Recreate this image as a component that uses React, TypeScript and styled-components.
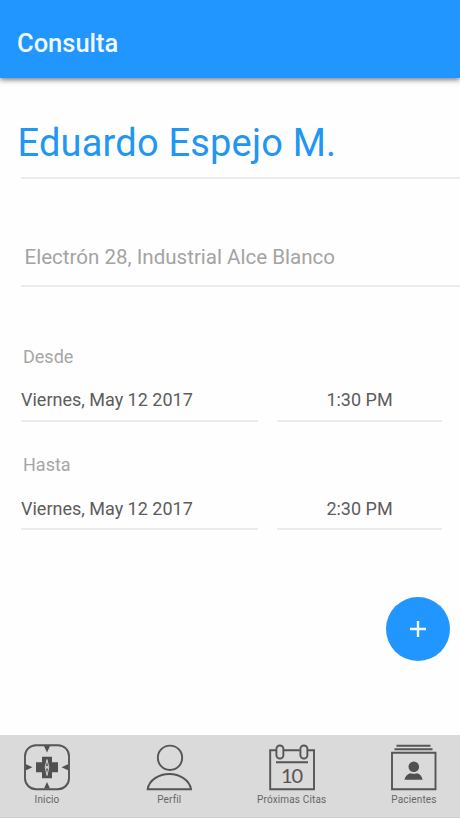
import React from 'react';
import styled, { createGlobalStyle } from 'styled-components';

const GlobalStyle = createGlobalStyle`
  * { box-sizing: border-box; }
  body { margin: 0; background: #fefefe; font-family: Roboto, sans-serif; }
`;

const Screen = styled.div`
  display: flex;
  flex-direction: column;
  width: 460px;
  height: 818px;
  overflow: hidden;
  background: #fefefe;
`;

const Header = styled.header`
  flex: none;
  height: 78px;
  padding: 28px 0 0 17px;
  background: #2196fe;
  box-shadow: 0 2px 5px rgba(0, 0, 0, 0.5);
`;

const Title = styled.h1`
  margin: 0;
  color: #f0f9ff;
  font-size: 25.5px;
  line-height: 30px;
  font-weight: 500;
`;

const Content = styled.main`
  flex: 1;
  display: flex;
  flex-direction: column;
`;

const NameField = styled.div`
  height: 101px;
  margin-left: 21px;
  padding-top: 42px;
  border-bottom: 2px solid #ebebeb;
  color: #2196f3;
  font-size: 38px;
  line-height: 46px;
  letter-spacing: 0.2px;
  text-indent: -3.5px;
  white-space: nowrap;
`;

const AddressField = styled.div`
  height: 108px;
  margin-left: 21px;
  padding: 66px 0 0 3.5px;
  border-bottom: 2px solid #ebebeb;
  color: #a3a3a3;
  font-size: 20.55px;
  line-height: 24px;
  white-space: nowrap;
`;

const Period = styled.section<{ $gap: number }>`
  margin-top: ${({ $gap }) => $gap}px;
  padding: 0 18px 0 21px;
`;

const PeriodLabel = styled.div`
  height: 22px;
  padding-left: 2px;
  color: #a6a6a6;
  font-size: 18px;
  line-height: 22px;
`;

const PeriodRow = styled.div`
  display: grid;
  grid-template-columns: 237px 165px;
  justify-content: space-between;
`;

const Value = styled.div<{ $center?: boolean; $drop: number }>`
  height: 54px;
  padding-top: ${({ $drop }) => $drop}px;
  border-bottom: 2px solid #ebebeb;
  color: #5c5c5c;
  font-size: 18px;
  line-height: 22px;
  text-align: ${({ $center }) => ($center ? 'center' : 'left')};
`;

const Actions = styled.div`
  display: flex;
  justify-content: flex-end;
  margin-top: auto;
  padding: 0 10px 74px 0;
`;

const AddButton = styled.button`
  display: grid;
  place-items: center;
  width: 64px;
  height: 64px;
  padding: 0;
  border: 0;
  border-radius: 50%;
  background: #2196fe;
`;

const TabBar = styled.nav`
  flex: none;
  display: flex;
  justify-content: space-between;
  height: 83px;
  padding: 8px 22px 0 23px;
  background: #dadada;
  border-bottom: 1px solid #cdcdcd;
`;

const Tab = styled.div`
  display: flex;
  flex-direction: column;
  align-items: center;
  width: 48px;
`;

const TabIcon = styled.svg`
  flex: none;
  width: 48px;
  height: 48px;
  fill: none;
  stroke: #555;
  stroke-width: 1.9;
`;

const TabLabel = styled.span`
  margin-top: 3px;
  color: #666;
  font-size: 10px;
  letter-spacing: 0.15px;
  line-height: 12px;
  white-space: nowrap;
`;

const DayNumber = styled.text`
  fill: #555;
  stroke: none;
  font-family: Lato, sans-serif;
  font-size: 20px;
  letter-spacing: -1px;
  text-anchor: middle;
`;

const HomeIcon = () => (
  <TabIcon viewBox="0 0 48 48">
    <rect x="2" y="2.2" width="44" height="44" rx="11" />
    <g fill="#505050" stroke="none">
      <path d="M21 3h6l-3 6.500zM21 45.500h6l-3-6.500zM3 21.300v6l6.500-3zM45 21.300v6l-6.500-3z" />
      <path d="M19 13.700H29V19.300H35V29.300H29V35.300H19V29.300H13V19.300H19Z" />
    </g>
    <path d="M24 16.500L25.800 24.300L24 32.500L22.200 24.300Z" stroke="#cfcfcf" strokeWidth="1" />
    <circle cx="24" cy="24.300" r="1.500" fill="#cfcfcf" stroke="none" />
  </TabIcon>
);

const ProfileIcon = () => (
  <TabIcon viewBox="0 0 48 48">
    <circle cx="25" cy="14.800" r="12.200" />
    <path d="M2.700 46.200C4 37 14 31 24.300 31S44.500 37 46 46.200Z" />
  </TabIcon>
);

const CalendarIcon = () => (
  <TabIcon viewBox="0 0 48 48">
    <path d="M8.300 7.200H2.200V46.300H46V7.200H39.700M16 7.200H31.700M8 19.200H40" />
    <rect x="8.400" y="2.500" width="7" height="13" rx="3.500" />
    <rect x="32.400" y="2.500" width="7" height="13" rx="3.500" />
    <DayNumber x="23.500" y="40">10</DayNumber>
  </TabIcon>
);

const PatientsIcon = () => (
  <TabIcon viewBox="0 0 48 48">
    <path d="M6.500 2.800H40.500M4.500 6.300H42.500M2 9.800H45.500V46.300H2Z" />
    <g fill="#505050" stroke="none">
      <circle cx="23.800" cy="23.700" r="5.300" />
      <path d="M14.400 36.700C15.200 33 18 31 20.300 30.300Q23.700 31.400 27.200 30.300C29.500 31 32 33 32.600 36.700Z" />
    </g>
  </TabIcon>
);

const tabs = [
  { label: 'Inicio', Icon: HomeIcon },
  { label: 'Perfil', Icon: ProfileIcon },
  { label: 'Próximas Citas', Icon: CalendarIcon },
  { label: 'Pacientes', Icon: PatientsIcon },
];

const periods = [
  { label: 'Desde', date: 'Viernes, May 12 2017', time: '1:30 PM', gap: 59, drop: 21 },
  { label: 'Hasta', date: 'Viernes, May 12 2017', time: '2:30 PM', gap: 32, drop: 22 },
];

export default function App() {
  return (
    <>
      <GlobalStyle />
      <Screen>
        <Header>
          <Title>Consulta</Title>
        </Header>
        <Content>
          <NameField>Eduardo Espejo M.</NameField>
          <AddressField>Electrón 28, Industrial Alce Blanco</AddressField>
          {periods.map(({ label, date, time, gap, drop }) => (
            <Period key={label} $gap={gap}>
              <PeriodLabel>{label}</PeriodLabel>
              <PeriodRow>
                <Value $drop={drop}>{date}</Value>
                <Value $drop={drop} $center>{time}</Value>
              </PeriodRow>
            </Period>
          ))}
          <Actions>
            <AddButton aria-label="Agregar">
              <svg width="18" height="18" viewBox="0 0 18 18" stroke="#f0f9ff" strokeWidth="2.4">
                <path d="M9 1v16M1 9h16" />
              </svg>
            </AddButton>
          </Actions>
        </Content>
        <TabBar>
          {tabs.map(({ label, Icon }) => (
            <Tab key={label}>
              <Icon />
              <TabLabel>{label}</TabLabel>
            </Tab>
          ))}
        </TabBar>
      </Screen>
    </>
  );
}
